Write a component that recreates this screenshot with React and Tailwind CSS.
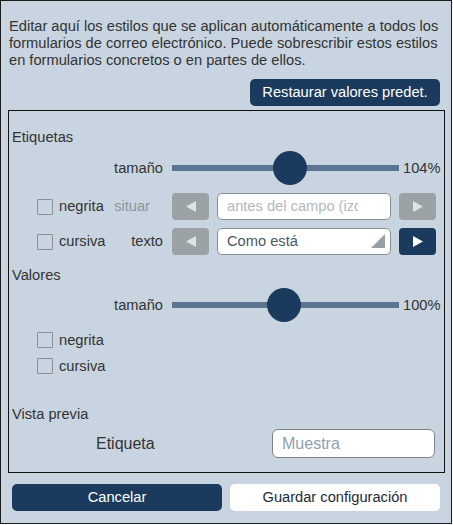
import React from "react";

const FONT = { fontFamily: '"Liberation Sans", Arial, sans-serif' };

function LeftArrow({ color }) {
  return (
    <svg width="10" height="11" viewBox="0 0 10 11">
      <polygon points="10,0 10,11 0,5.5" fill={color} />
    </svg>
  );
}
function RightArrow({ color }) {
  return (
    <svg width="10" height="11" viewBox="0 0 10 11">
      <polygon points="0,0 0,11 10,5.5" fill={color} />
    </svg>
  );
}

function NavButton({ dir, active }) {
  return (
    <div
      className={
        "w-[37px] h-[27px] rounded-[4px] flex items-center justify-center shrink-0 " +
        (active ? "bg-[#1a3a5e]" : "bg-[#9ba2a6]")
      }
    >
      {dir === "left" ? (
        <LeftArrow color={active ? "#ffffff" : "#dfe3e6"} />
      ) : (
        <RightArrow color={active ? "#ffffff" : "#dfe3e6"} />
      )}
    </div>
  );
}

function Checkbox() {
  return <div className="w-[16px] h-[16px] border border-[#8a9096] rounded-[1px] shrink-0" />;
}

function SliderRow({ value, thumbLeft }) {
  return (
    <div className="h-[34px] flex items-center">
      <div className="w-[154px] text-right leading-[17px]">tamaño</div>
      <div className="relative ml-[9px] w-[227px] h-[34px] flex items-center">
        <div className="w-full h-[6px] bg-[#5b7590]" />
        <div
          className="absolute top-0 w-[34px] h-[34px] rounded-full bg-[#1a3a5e]"
          style={{ left: thumbLeft }}
        />
      </div>
      <div className="ml-[4px] leading-[17px]">{value}</div>
    </div>
  );
}

export default function App() {
  return (
    <div
      style={FONT}
      className="w-[452px] h-[524px] border border-[#1a1a1a] bg-[#c8d5e0] text-[#333333] text-[14.667px] flex flex-col"
    >
      <p className="mt-[17px] ml-[8px] w-[440px] leading-[17px]">
        Editar aquí los estilos que se aplican automáticamente a todos los formularios de correo
        electrónico. Puede sobrescribir estos estilos en formularios concretos o en partes de ellos.
      </p>

      <div className="mt-[10px] self-end mr-[11px] w-[190px] h-[27px] rounded-[5px] bg-[#1a3a5e] text-white flex items-center justify-center leading-[17px]">
        Restaurar valores predet.
      </div>

      <div className="mt-[4px] ml-[7px] w-[437px] h-[363px] border border-[#111111] flex flex-col">
        <div className="mt-[17px] h-[18px] pl-[3px] leading-[18px]">Etiquetas</div>

        <div className="mt-[5px]">
          <SliderRow value="104%" thumbLeft={101} />
        </div>

        <div className="mt-[8px] h-[27px] flex items-center">
          <div className="w-[154px] flex items-center">
            <div className="ml-[28px]">
              <Checkbox />
            </div>
            <span className="ml-[6px] leading-[17px]">negrita</span>
            <span className="ml-auto mr-[13px] leading-[17px] text-[#8b959d]">situar</span>
          </div>
          <div className="ml-[9px]">
            <NavButton dir="left" />
          </div>
          <div className="ml-[8px] w-[174px] h-[27px] bg-white border border-[#8a8f94] rounded-[5px] flex items-center pl-[9px] pr-[32px] overflow-hidden">
            <span className="whitespace-nowrap overflow-hidden text-[#b3b8bd] leading-[17px]">
              antes del campo (izquierda)
            </span>
          </div>
          <div className="ml-[8px]">
            <NavButton dir="right" />
          </div>
        </div>

        <div className="mt-[8px] h-[27px] flex items-center">
          <div className="w-[154px] flex items-center">
            <div className="ml-[28px]">
              <Checkbox />
            </div>
            <span className="ml-[6px] leading-[17px]">cursiva</span>
            <span className="ml-auto leading-[17px]">texto</span>
          </div>
          <div className="ml-[9px]">
            <NavButton dir="left" />
          </div>
          <div className="relative ml-[8px] w-[174px] h-[27px] bg-white border border-[#8a8f94] rounded-[5px] flex items-center pl-[9px]">
            <span className="whitespace-nowrap text-[#4a5866] leading-[17px]">Como está</span>
            <svg
              className="absolute right-[5px] bottom-[6px]"
              width="14"
              height="14"
              viewBox="0 0 14 14"
            >
              <polygon points="14,0 14,14 0,14" fill="#98a0a6" />
            </svg>
          </div>
          <div className="ml-[8px]">
            <NavButton dir="right" active />
          </div>
        </div>

        <div className="mt-[11px] h-[18px] pl-[3px] leading-[18px]">Valores</div>

        <div className="mt-[4px]">
          <SliderRow value="100%" thumbLeft={95} />
        </div>

        <div className="mt-[10px] h-[16px] flex items-center">
          <div className="ml-[28px]">
            <Checkbox />
          </div>
          <span className="ml-[6px] leading-[17px]">negrita</span>
        </div>

        <div className="mt-[10px] h-[16px] flex items-center">
          <div className="ml-[28px]">
            <Checkbox />
          </div>
          <span className="ml-[6px] leading-[17px]">cursiva</span>
        </div>

        <div className="mt-[31px] h-[18px] pl-[3px] leading-[18px]">Vista previa</div>

        <div className="mt-[6px] h-[29px] flex items-center">
          <span className="ml-[87px] text-[16px] leading-[19px]">Etiqueta</span>
          <div className="ml-auto mr-[9px] w-[163px] h-[29px] bg-white border border-[#7d8389] rounded-[6px] flex items-center pl-[9px]">
            <span className="text-[16px] leading-[19px] text-[#8ca1b5]">Muestra</span>
          </div>
        </div>
      </div>

      <div className="mt-[11px] ml-[11px] flex gap-[8px]">
        <div className="w-[210px] h-[27px] rounded-[5px] bg-[#1a3a5e] text-white flex items-center justify-center leading-[17px]">
          Cancelar
        </div>
        <div className="w-[210px] h-[27px] rounded-[5px] bg-white text-[#1c2a38] flex items-center justify-center leading-[17px]">
          Guardar configuración
        </div>
      </div>
    </div>
  );
}
